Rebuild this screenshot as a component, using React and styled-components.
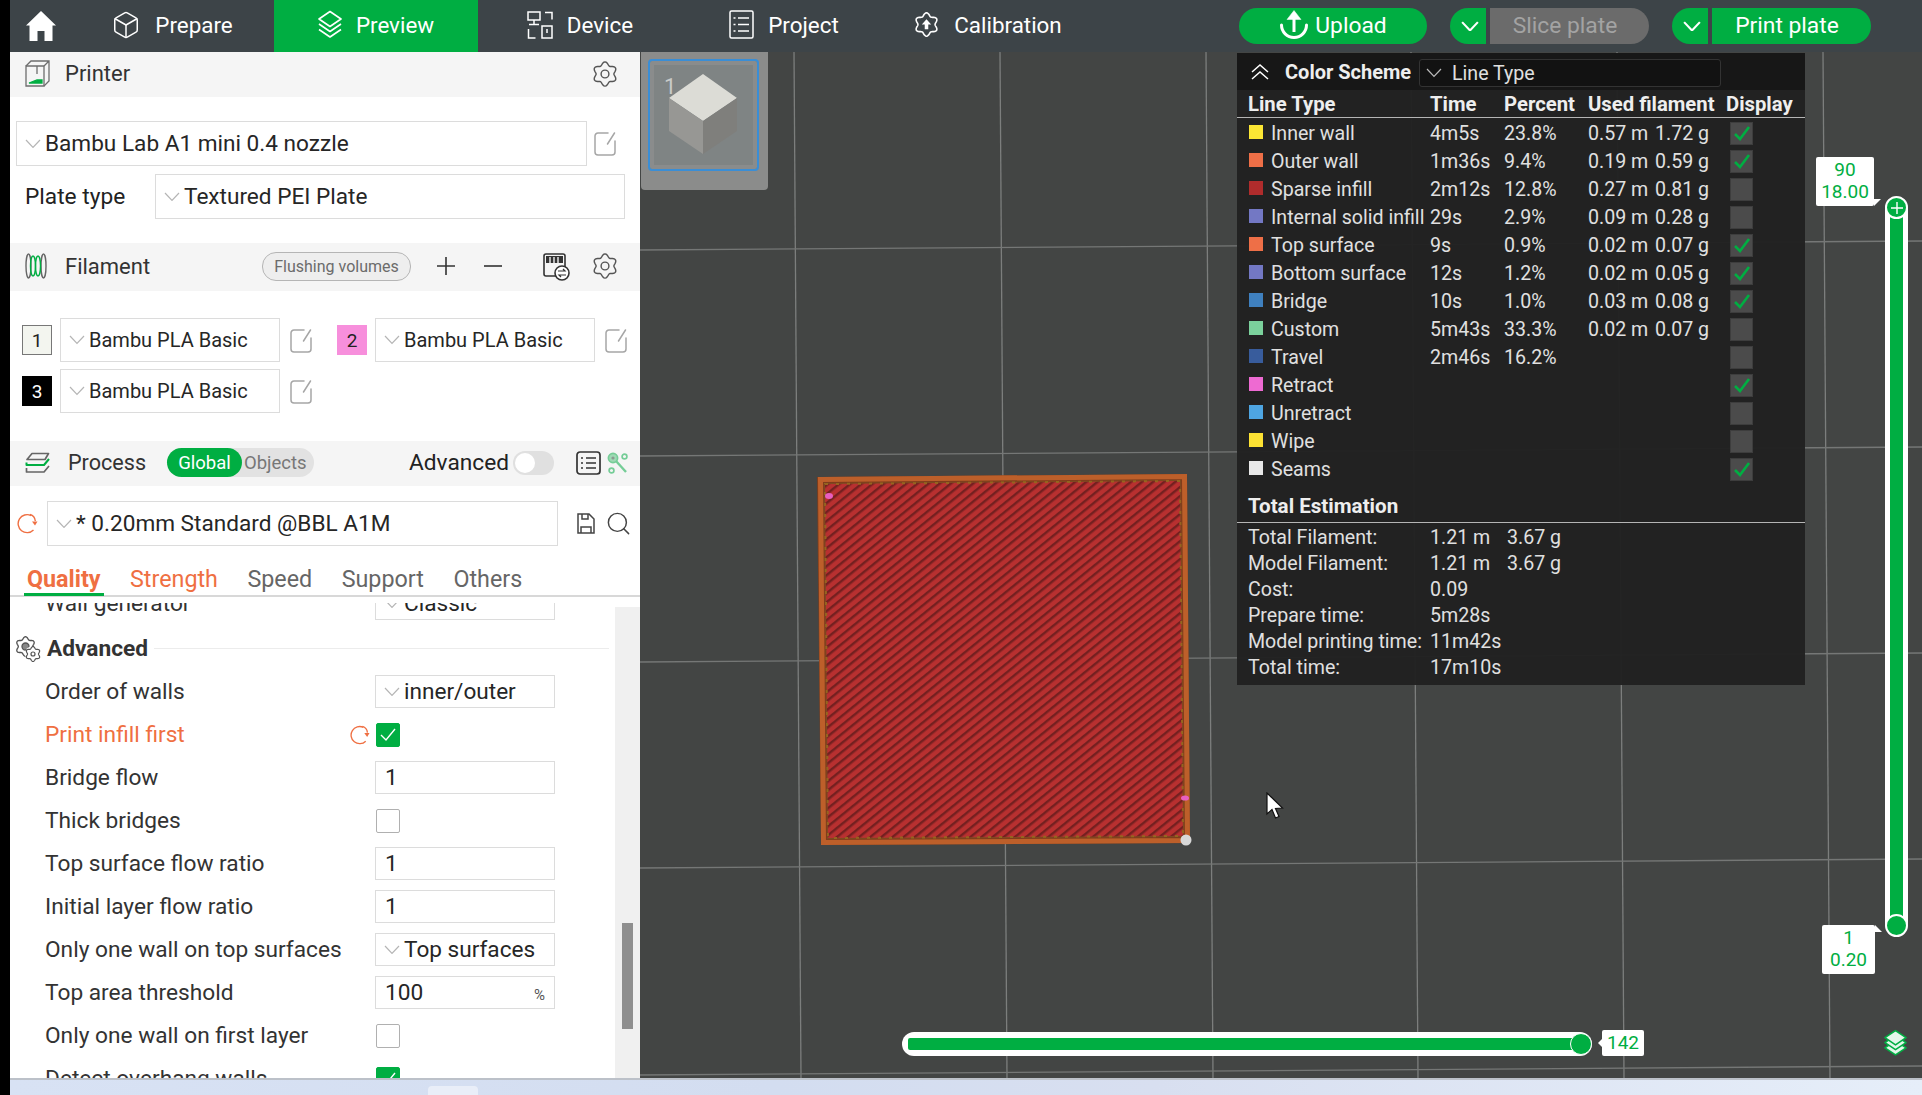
import React from 'react'
import styled, { createGlobalStyle } from 'styled-components'
import { Box, Search } from 'lucide-react'

const GREEN = '#00ae42'
const ORANGE = '#ef6f42'

const GlobalStyle = createGlobalStyle`
  html, body { margin: 0; padding: 0; background: #000; }
  * { box-sizing: border-box; }
  body { font-family: Roboto, "Noto Sans", sans-serif; overflow: hidden; }
`

const Chev = ({ color = '#b5b5b5', w = 16, sw = 1.2 }) => (
  <svg width={w} height={w * 0.6} viewBox="0 0 16 9.6" fill="none" stroke={color} strokeWidth={sw}>
    <polyline points="1,1 8,8.4 15,1" />
  </svg>
)

// six lobed outline used by all the settings gears
const gearOutline = Array.from({ length: 72 }, (_, i) => {
  const t = (i / 72) * Math.PI * 2
  const r = 9.7 + 1.5 * Math.cos(6 * t)
  return `${(12 + r * Math.sin(t)).toFixed(2)},${(12 - r * Math.cos(t)).toFixed(2)}`
}).join(' ')

const Gear = ({ size = 26, color = '#555', sw = 1.3, hub = 3.6, hubFill = 'none' }) => (
  <svg width={size} height={size} viewBox="0 0 24 24" fill="none" stroke={color} strokeWidth={sw}>
    <polygon points={gearOutline} strokeLinejoin="round" />
    {hub > 0 && <circle cx="12" cy="12" r={hub} fill={hubFill} />}
  </svg>
)

const HomeIcon = () => (
  <svg width="32" height="32" viewBox="0 0 32 32" fill="#fff">
    <path d="M16 1 L31 15.5 L27.5 15.5 L27.5 31 L19.5 31 L19.5 21 L12.5 21 L12.5 31 L4.5 31 L4.5 15.5 L1 15.5 Z" />
  </svg>
)

const StackIcon = () => (
  <svg width="24" height="29" viewBox="0 0 24 29" fill="none" stroke="#fff" strokeWidth="1.6" strokeLinejoin="round">
    <path d="M12 1.5 L23 9 L12 16.5 L1 9 Z" />
    <path d="M1 14 L12 21.5 L23 14" />
    <path d="M1 19.5 L12 27 L23 19.5" />
  </svg>
)

const LayersButtonIcon = () => (
  <svg width="23" height="28" viewBox="0 0 24 29" fill="#e4f7eb" stroke={GREEN} strokeWidth="1.6" strokeLinejoin="round">
    <path d="M1 19.5 L12 12 L23 19.5 L12 27 Z" />
    <path d="M1 14 L12 6.5 L23 14 L12 21.5 Z" />
    <path d="M12 1.5 L23 9 L12 16.5 L1 9 Z" />
  </svg>
)

const DeviceIcon = () => (
  <svg width="26" height="28" viewBox="0 0 26 28" fill="none" stroke="#fff" strokeWidth="1.5">
    <rect x="1" y="1" width="12" height="8" />
    <path d="M7 9v4M2 13.5h10" />
    <path d="M18 1.5h7v7" />
    <path d="M1.5 18v9h7" />
    <rect x="15" y="15" width="10" height="12" />
    <path d="M20 18v4" />
  </svg>
)

const ProjectIcon = () => (
  <svg width="25" height="29" viewBox="0 0 25 29" fill="none" stroke="#fff" strokeWidth="1.5">
    <rect x="1" y="1" width="23" height="27" rx="1.5" />
    <path d="M9 8h11M9 14.5h11M9 21h11M4.5 8h2M4.5 14.5h2M4.5 21h2" />
  </svg>
)

const SettingsListIcon = () => (
  <svg width="25" height="24" viewBox="0 0 25 24" fill="none" stroke="#333" strokeWidth="1.7">
    <rect x="1" y="1" width="23" height="22" rx="3" />
    <path d="M10 7h10M10 12h10M10 17h10M5 7h2M5 12h2M5 17h2" />
  </svg>
)

const CalibrationIcon = () => (
  <Overlaid>
    <Gear size={25} color="#fff" sw={1.5} hub={0} />
    <svg width="25" height="25" viewBox="0 0 24 24" fill="#fff">
      <path d="M12 7 L16.5 12 H13.7 V16.5 H10.3 V12 H7.5 Z" />
    </svg>
  </Overlaid>
)

const UploadIcon = () => (
  <svg width="30" height="31" viewBox="0 0 30 31" fill="none" stroke="#fff" strokeWidth="3">
    <path d="M2.5 15 a12.5 12.5 0 0 0 25 0" strokeLinecap="round" />
    <path d="M15 6V22" />
    <path d="M8 9.5 L15 0.5 L22 9.5 Z" fill="#fff" strokeWidth="0.5" />
  </svg>
)

const EditIcon = () => (
  <svg width="22" height="25" viewBox="0 0 22 25" fill="none" stroke="#a6a6a6" strokeWidth="1.5" strokeLinecap="round">
    <path d="M14 2H4a3 3 0 0 0-3 3v16a3 3 0 0 0 3 3h14a3 3 0 0 0 3-3V10" />
    <path d="M20.5 2 L13.5 13" />
  </svg>
)

const PrinterIcon = () => (
  <svg width="25" height="27" viewBox="0 0 25 27" fill="none" stroke="#6d6d6d" strokeWidth="1.3">
    <path d="M1 6h18v20H1z" />
    <path d="M1 6l5-5h18v20l-5 5M19 6l5-5" />
    <path d="M4 23 h13 v-3 h-5 Z" fill={GREEN} stroke={GREEN} />
    <path d="M12 6v8" />
  </svg>
)

const SpoolIcon = () => (
  <svg width="22" height="26" viewBox="0 0 22 26" fill="none" strokeWidth="1.4">
    <ellipse cx="3.5" cy="13" rx="2.5" ry="12" stroke="#666" />
    <ellipse cx="18.5" cy="13" rx="2.5" ry="12" stroke="#666" />
    <ellipse cx="8" cy="13" rx="2.5" ry="10" stroke={GREEN} />
    <ellipse cx="13" cy="13" rx="2.5" ry="10" stroke={GREEN} />
  </svg>
)

const FlushIcon = () => (
  <svg width="27" height="29" viewBox="0 0 27 29" fill="none" stroke="#333" strokeWidth="1.6">
    <rect x="1" y="2" width="21" height="22" rx="2" />
    <rect x="3" y="4" width="17" height="7" fill="#333" strokeWidth="0" />
    <path d="M7 5v6M11 5v6M15 5v6" stroke="#fff" strokeWidth="1.3" />
    <circle cx="19" cy="21" r="7" fill="#fff" />
    <path d="M15 19h7l-2-2M23 23h-7l2 2" strokeWidth="1.2" />
  </svg>
)

const ProcessIcon = () => (
  <svg width="25" height="22" viewBox="0 0 25 22" fill="none" strokeWidth="1.7" strokeLinejoin="round">
    <path d="M7 1.5 H23.5 L20 7.5 H2 Z" stroke="#666" />
    <path d="M1.5 10.5 V13 H19 L24 7" stroke={GREEN} strokeWidth="2" />
    <path d="M1.5 16 V20 H19 L24 14" stroke="#666" />
  </svg>
)

const ToolIcon = () => (
  <svg width="21" height="22" viewBox="0 0 21 22" fill="none" stroke="#75cd97" strokeWidth="1.7">
    <circle cx="6" cy="6" r="4.6" fill="#9ed9b4" />
    <circle cx="6" cy="6" r="1.6" fill="#8a9a90" stroke="none" />
    <circle cx="17.5" cy="4.5" r="2.4" />
    <circle cx="4.5" cy="18.5" r="2.4" />
    <path d="M9 9 L19 20" strokeWidth="2.4" />
  </svg>
)

const ResetIcon = ({ size = 21 }) => (
  <svg width={size} height={size} viewBox="0 0 21 21" fill="none" stroke={ORANGE} strokeWidth="1.4">
    <path d="M14 2.5 A9 9 0 1 0 16.5 17" />
    <path d="M13 1.5 C16.5 2.5 18 5 18.3 8" />
    <path d="M15 8.5 L20.5 8.5 L18 12.5 Z" fill={ORANGE} stroke="none" />
  </svg>
)

const SaveIcon = () => (
  <svg width="18" height="21" viewBox="0 0 18 21" fill="none" stroke="#444" strokeWidth="1.5">
    <path d="M1 1h11l5 5v14H1z" />
    <path d="M5 1v5h6V1M4 20v-6h10v6" />
  </svg>
)

const GearsIcon = () => (
  <Overlaid>
    <Gear size={21} color="#555" sw={1.5} hub={4} hubFill="#888" />
    <OffsetGear>
      <Gear size={16} color="#555" sw={1.8} hub={3} />
    </OffsetGear>
  </Overlaid>
)

const PlusIcon = () => (
  <svg width="18" height="18" viewBox="0 0 18 18" stroke="#333" strokeWidth="1.6"><path d="M9 0v18M0 9h18" /></svg>
)

const MinusIcon = () => (
  <svg width="18" height="18" viewBox="0 0 18 18" stroke="#333" strokeWidth="1.6"><path d="M0 9h18" /></svg>
)

const Overlaid = styled.span`
  position: relative;
  display: inline-flex;
  width: 26px;
  height: 26px;
  align-items: flex-start;
  justify-content: flex-start;
  svg:nth-child(2) { position: absolute; left: 0; top: 0; }
`
const OffsetGear = styled.span`
  position: absolute;
  right: 0;
  bottom: 0;
  display: flex;
  background: #fff;
  border-radius: 50%;
`

const App = () => (
  <>
    <GlobalStyle />
    <Page>
      <TopBar>
        <HomeSlot><HomeIcon /></HomeSlot>
        <Tab><Box size={30} color="#fff" strokeWidth={1.2} />Prepare</Tab>
        <Tab $active><StackIcon />Preview</Tab>
        <Tab><DeviceIcon />Device</Tab>
        <Tab><ProjectIcon />Project</Tab>
        <Tab><CalibrationIcon />Calibration</Tab>
        <Actions>
          <PillButton $w={188}><UploadIcon />Upload</PillButton>
          <SplitGroup>
            <SplitArrow><Chev color="#fff" w={18} sw={1.9} /></SplitArrow>
            <SplitMain $disabled>Slice plate</SplitMain>
          </SplitGroup>
          <SplitGroup>
            <SplitArrow><Chev color="#fff" w={18} sw={1.9} /></SplitArrow>
            <SplitMain>Print plate</SplitMain>
          </SplitGroup>
        </Actions>
      </TopBar>

      <Main>
        <Sidebar>
          <SectionHead $h={45}>
            <HeadIcon><PrinterIcon /></HeadIcon>
            <HeadTitle>Printer</HeadTitle>
            <HeadRight><Gear /></HeadRight>
          </SectionHead>
          <PrinterBody>
            <FieldRow>
              <Select $w={571} $h={45}><Chev />Bambu Lab A1 mini 0.4 nozzle</Select>
              <EditSlot $gap={7}><EditIcon /></EditSlot>
            </FieldRow>
            <FieldRow>
              <PlateLabel>Plate type</PlateLabel>
              <Select $w={470} $h={45}><Chev />Textured PEI Plate</Select>
            </FieldRow>
          </PrinterBody>

          <SectionHead $h={48}>
            <HeadIcon><SpoolIcon /></HeadIcon>
            <HeadTitle>Filament</HeadTitle>
            <FlushButton>Flushing volumes</FlushButton>
            <IconSlot $gap={26}><PlusIcon /></IconSlot>
            <IconSlot $gap={29}><MinusIcon /></IconSlot>
            <IconSlot $gap={41}><FlushIcon /></IconSlot>
            <IconSlot $gap={22}><Gear /></IconSlot>
          </SectionHead>
          <FilamentGrid>
            {[
              { n: 1, bg: '#f3f5ef', fg: '#222', line: '#777' },
              { n: 2, bg: '#f78fdc', fg: '#222', line: '#f78fdc' },
              { n: 3, bg: '#000', fg: '#fff', line: '#000' },
            ].map((f) => (
              <FilamentItem key={f.n}>
                <Swatch $bg={f.bg} $fg={f.fg} $line={f.line}>{f.n}</Swatch>
                <Select $w={220} $h={44} $fs={20}><Chev />Bambu PLA Basic</Select>
                <EditSlot $gap={2}><EditIcon /></EditSlot>
              </FilamentItem>
            ))}
          </FilamentGrid>

          <SectionHead $h={45} $pr={12}>
            <HeadIcon><ProcessIcon /></HeadIcon>
            <ProcessTitle>Process</ProcessTitle>
            <ModeToggle>
              <ModeOn>Global</ModeOn>
              <ModeOff>Objects</ModeOff>
            </ModeToggle>
            <AdvancedLabel>Advanced</AdvancedLabel>
            <Switch />
            <IconSlot $gap={22}><SettingsListIcon /></IconSlot>
            <IconSlot $gap={6}><ToolIcon /></IconSlot>
          </SectionHead>
          <PresetRow>
            <ResetSlot><ResetIcon /></ResetSlot>
            <Select $w={511} $h={45}><Chev />* 0.20mm Standard @BBL A1M</Select>
            <IconSlot $gap={19}><SaveIcon /></IconSlot>
            <IconSlot $gap={10}><Search size={27} color="#444" strokeWidth={1.3} /></IconSlot>
          </PresetRow>
          <Tabs>
            <PageTab $active>Quality</PageTab>
            <PageTab $changed>Strength</PageTab>
            <PageTab>Speed</PageTab>
            <PageTab>Support</PageTab>
            <PageTab>Others</PageTab>
          </Tabs>

          <SettingsArea>
            <SettingsClip>
              <SettingsInner>
                <SettingRow>
                  <SettingLabel>Wall generator</SettingLabel>
                  <Select $w={180} $h={33}><Chev />Classic</Select>
                </SettingRow>
                <GroupHead>
                  <GearsIcon />
                  <GroupTitle>Advanced</GroupTitle>
                  <GroupLine />
                </GroupHead>
                {settings.map((s) => (
                  <SettingRow key={s.label}>
                    <SettingLabel $changed={s.changed}>{s.label}</SettingLabel>
                    {s.changed && <RowReset><ResetIcon size={20} /></RowReset>}
                    {s.select && <Select $w={180} $h={33}><Chev />{s.select}</Select>}
                    {s.value && (
                      <Input>
                        {s.value}
                        {s.unit && <Unit>{s.unit}</Unit>}
                      </Input>
                    )}
                    {s.check !== undefined && (
                      <Check $on={s.check}>
                        {s.check && (
                          <svg width="18" height="16" viewBox="0 0 18 16" fill="none" stroke="#fff" strokeWidth="1.4">
                            <polyline points="2,8 7,13 16,2" />
                          </svg>
                        )}
                      </Check>
                    )}
                  </SettingRow>
                ))}
              </SettingsInner>
            </SettingsClip>
            <ScrollTrack><ScrollThumb /></ScrollTrack>
          </SettingsArea>
        </Sidebar>

        <Viewport>
          <Scene />
          <PlateThumb>
            <PlateInner>
              <PlateNo>1</PlateNo>
              <CubeSvg width="68" height="80" viewBox="0 0 68 80">
                <polygon points="34,0 68,24 34,47 0,24" fill="#dcdcd6" />
                <polygon points="0,24 34,47 34,80 0,57" fill="#979794" />
                <polygon points="68,24 34,47 34,80 68,57" fill="#7f7f7c" />
              </CubeSvg>
            </PlateInner>
          </PlateThumb>

          <Legend>
            <LegendTop>
              <svg width="20" height="17" viewBox="0 0 20 17" fill="none" stroke="#fff" strokeWidth="1.5">
                <polyline points="2,9 10,2 18,9" />
                <polyline points="2,16 10,9 18,16" />
              </svg>
              <LegendTitle>Color Scheme</LegendTitle>
              <LegendSelect><Chev color="#bbb" w={16} />Line Type</LegendSelect>
            </LegendTop>
            <LegendHead>
              <span>Line Type</span>
              <span>Time</span>
              <span>Percent</span>
              <span>Used filament</span>
              <span>Display</span>
            </LegendHead>
            <LegendRows>
              {lines.map((l) => (
                <LegendRow key={l.name}>
                  <NameCell><ColorChip $c={l.color} />{l.name}</NameCell>
                  <span>{l.time}</span>
                  <span>{l.pct}</span>
                  <span>{l.len}</span>
                  <span>{l.g}</span>
                  <LegendCheck>
                    {l.on && (
                      <svg width="18" height="16" viewBox="0 0 18 16" fill="none" stroke={GREEN} strokeWidth="2.6">
                        <polyline points="2,9 7,14 16,2" />
                      </svg>
                    )}
                  </LegendCheck>
                </LegendRow>
              ))}
            </LegendRows>
            <TotalHead>Total Estimation</TotalHead>
            <TotalRows>
              {totals.map((t) => (
                <TotalRow key={t.k}>
                  <span>{t.k}</span>
                  <span>{t.a}</span>
                  <span>{t.b}</span>
                </TotalRow>
              ))}
            </TotalRows>
          </Legend>

          <VTrack />
          <VThumb $top={144}>
            <svg width="14" height="14" viewBox="0 0 14 14" stroke="#fff" strokeWidth="1.4"><path d="M7 1v12M1 7h12" /></svg>
          </VThumb>
          <VThumb $top={862} />
          <TipUp>90<br />18.00</TipUp>
          <TipDown>1<br />0.20</TipDown>

          <HTrack>
            <HFill />
            <HThumb />
          </HTrack>
          <HTip>142</HTip>
          <LayersCorner><LayersButtonIcon /></LayersCorner>
          <Cursor>
            <svg width="20" height="28" viewBox="0 0 20 28">
              <path d="M2 1 L2 22 L7 17.5 L10.5 26 L14 24.5 L10.5 16.5 L17.5 16 Z" fill="#fff" stroke="#111" strokeWidth="1.2" />
            </svg>
          </Cursor>
        </Viewport>
      </Main>
      <BottomStrip><BottomTab /></BottomStrip>
    </Page>
  </>
)

// grid lines and the sliced model, in page coordinates
const Scene = () => {
  const verticals = [794, 1000, 1206, 1411, 1617, 1823]
  const horizontals = [250, 456, 662, 868, 1075]
  return (
    <SceneSvg viewBox="640 52 1282 1026">
      <defs>
        <pattern id="infill" width="7" height="7" patternUnits="userSpaceOnUse" patternTransform="rotate(-39)">
          <rect width="7" height="7" fill="#b83030" />
          <rect y="0" width="7" height="2" fill="#742020" />
          <rect y="2" width="7" height="0.9" fill="#962828" />
        </pattern>
      </defs>
      {verticals.map((x) => (
        <line key={x} x1={x} y1="52" x2={x + 7} y2="1078" stroke="#7c7e7d" strokeWidth="1.3" />
      ))}
      {horizontals.map((y) => (
        <line key={y} x1="640" y1={y} x2="1922" y2={y - 9} stroke="#757776" strokeWidth="1.3" />
      ))}
      <polygon points="817,477 1187,474 1190,843 821,845" fill="#7f3d1c" />
      <polygon points="820.5,479.5 1184.5,476.5 1187.5,840.5 823.5,842.5" fill="none" stroke="#bd5f2a" strokeWidth="5" />
      <polygon points="824,483 1181,480 1184,837 827,839" fill="#7e4a20" />
      <polygon points="825,484 1180,481 1183,836 828,838" fill="url(#infill)" />
      <polygon points="825,484 1180,481 1183,836 828,838" fill="none" stroke="#96641f" strokeWidth="2" strokeDasharray="3 8" />
      <ellipse cx="829" cy="496" rx="4" ry="3" fill="#e85fc0" />
      <ellipse cx="1185" cy="798" rx="4" ry="2.6" fill="#e85fc0" />
      <circle cx="1186" cy="840" r="5.5" fill="#d8d8d8" />
    </SceneSvg>
  )
}

const settings = [
  { label: 'Order of walls', select: 'inner/outer' },
  { label: 'Print infill first', check: true, changed: true },
  { label: 'Bridge flow', value: '1' },
  { label: 'Thick bridges', check: false },
  { label: 'Top surface flow ratio', value: '1' },
  { label: 'Initial layer flow ratio', value: '1' },
  { label: 'Only one wall on top surfaces', select: 'Top surfaces' },
  { label: 'Top area threshold', value: '100', unit: '%' },
  { label: 'Only one wall on first layer', check: false },
  { label: 'Detect overhang walls', check: true },
]

const lines = [
  { name: 'Inner wall', color: '#fbe634', time: '4m5s', pct: '23.8%', len: '0.57 m', g: '1.72 g', on: true },
  { name: 'Outer wall', color: '#ee6f47', time: '1m36s', pct: '9.4%', len: '0.19 m', g: '0.59 g', on: true },
  { name: 'Sparse infill', color: '#b02c2c', time: '2m12s', pct: '12.8%', len: '0.27 m', g: '0.81 g' },
  { name: 'Internal solid infill', color: '#7378c4', time: '29s', pct: '2.9%', len: '0.09 m', g: '0.28 g' },
  { name: 'Top surface', color: '#ee6f47', time: '9s', pct: '0.9%', len: '0.02 m', g: '0.07 g', on: true },
  { name: 'Bottom surface', color: '#7378c4', time: '12s', pct: '1.2%', len: '0.02 m', g: '0.05 g', on: true },
  { name: 'Bridge', color: '#3f80bf', time: '10s', pct: '1.0%', len: '0.03 m', g: '0.08 g', on: true },
  { name: 'Custom', color: '#7bd19c', time: '5m43s', pct: '33.3%', len: '0.02 m', g: '0.07 g' },
  { name: 'Travel', color: '#385c9c', time: '2m46s', pct: '16.2%' },
  { name: 'Retract', color: '#ee6ad2', on: true },
  { name: 'Unretract', color: '#4ea5e2' },
  { name: 'Wipe', color: '#fde233' },
  { name: 'Seams', color: '#e8e8e8', on: true },
]

const totals = [
  { k: 'Total Filament:', a: '1.21 m', b: '3.67 g' },
  { k: 'Model Filament:', a: '1.21 m', b: '3.67 g' },
  { k: 'Cost:', a: '0.09' },
  { k: 'Prepare time:', a: '5m28s' },
  { k: 'Model printing time:', a: '11m42s' },
  { k: 'Total time:', a: '17m10s' },
]

const Page = styled.div`
  width: 1922px;
  height: 1095px;
  padding-left: 10px;
  display: flex;
  flex-direction: column;
  background: #000;
  overflow: hidden;
`
const TopBar = styled.div`
  height: 52px;
  flex: none;
  display: flex;
  align-items: stretch;
  background: #3d4448;
  color: #fff;
  font-size: 22.4px;
`
const HomeSlot = styled.div`
  width: 60px;
  padding-left: 15px;
  display: flex;
  align-items: center;
`
const Tab = styled.div`
  width: 204px;
  padding-bottom: 3px;
  display: flex;
  align-items: center;
  justify-content: center;
  gap: 14px;
  background: ${(p) => (p.$active ? GREEN : 'transparent')};
`
const Actions = styled.div`
  margin-left: auto;
  padding-right: 51px;
  display: flex;
  align-items: center;
  gap: 23px;
  font-size: 22.8px;
`
const PillButton = styled.div`
  width: ${(p) => p.$w}px;
  height: 36px;
  border-radius: 18px;
  background: ${GREEN};
  padding-bottom: 2px;
  display: flex;
  align-items: center;
  justify-content: center;
  gap: 6px;
`
const SplitGroup = styled.div`
  display: flex;
  gap: 4px;
  height: 36px;
`
const SplitArrow = styled.div`
  width: 36px;
  padding-left: 4px;
  border-radius: 18px 0 0 18px;
  background: ${GREEN};
  display: flex;
  align-items: center;
  justify-content: center;
`
const SplitMain = styled.div`
  width: 159px;
  padding: 0 9px 2px 0;
  border-radius: 0 18px 18px 0;
  background: ${(p) => (p.$disabled ? '#6b6b6b' : GREEN)};
  color: ${(p) => (p.$disabled ? '#a3a3a3' : '#fff')};
  display: flex;
  align-items: center;
  justify-content: center;
`
const Main = styled.div`
  flex: 1;
  min-height: 0;
  display: flex;
`
const Sidebar = styled.div`
  width: 630px;
  flex: none;
  display: flex;
  flex-direction: column;
  background: #fff;
  color: #222;
  font-size: 22.7px;
`
const SectionHead = styled.div`
  height: ${(p) => p.$h}px;
  flex: none;
  padding: 0 ${(p) => p.$pr ?? 22}px 2px 15px;
  display: flex;
  align-items: center;
  background: #f5f5f5;
`
const HeadIcon = styled.div`
  width: 40px;
  display: flex;
`
const HeadTitle = styled.div`
  color: #333;
  font-size: 22px;
`
const HeadRight = styled.div`
  margin-left: auto;
  display: flex;
`
const PrinterBody = styled.div`
  padding: 24px 0 24px 6px;
  display: flex;
  flex-direction: column;
  gap: 8px;
`
const FieldRow = styled.div`
  display: flex;
  align-items: center;
`
const Select = styled.div`
  width: ${(p) => p.$w}px;
  height: ${(p) => p.$h}px;
  flex: none;
  border: 1px solid #dcdcdc;
  background: #fff;
  padding-left: 8px;
  display: flex;
  align-items: center;
  gap: 4px;
  color: #262626;
  font-size: ${(p) => p.$fs ?? 22.6}px;
  white-space: nowrap;
`
const EditSlot = styled.div`
  margin-left: ${(p) => p.$gap}px;
  display: flex;
`
const PlateLabel = styled.div`
  width: 139px;
  padding-left: 9px;
  flex: none;
`
const FlushButton = styled.div`
  margin-left: auto;
  width: 149px;
  height: 29px;
  border: 1px solid #b5b5b5;
  border-radius: 14px;
  background: #eeeeee;
  color: #6b6b6b;
  font-size: 16px;
  display: flex;
  align-items: center;
  justify-content: center;
`
const IconSlot = styled.div`
  margin-left: ${(p) => p.$gap}px;
  display: flex;
  flex: none;
`
const FilamentGrid = styled.div`
  padding: 27px 0 28px 12px;
  display: grid;
  grid-template-columns: 290px 290px;
  column-gap: 25px;
  row-gap: 7px;
`
const FilamentItem = styled.div`
  display: flex;
  align-items: center;
  gap: 8px;
`
const Swatch = styled.div`
  width: 30px;
  height: 30px;
  flex: none;
  background: ${(p) => p.$bg};
  color: ${(p) => p.$fg};
  border: 1px solid ${(p) => p.$line};
  font-size: 19px;
  display: flex;
  align-items: center;
  justify-content: center;
`
const ProcessTitle = styled.div`
  width: 99px;
  margin-left: 3px;
  flex: none;
  color: #333;
  font-size: 21.6px;
`
const ModeToggle = styled.div`
  width: 147px;
  height: 29px;
  flex: none;
  border-radius: 15px;
  background: #e2e2e2;
  display: flex;
  align-items: center;
  font-size: 18.5px;
`
const ModeOn = styled.div`
  width: 75px;
  height: 100%;
  border-radius: 15px;
  background: ${GREEN};
  color: #fff;
  display: flex;
  align-items: center;
  justify-content: center;
`
const ModeOff = styled.div`
  padding-left: 2px;
  color: #777;
`
const AdvancedLabel = styled.div`
  margin-left: auto;
`
const Switch = styled.div`
  width: 41px;
  height: 24px;
  margin-left: 4px;
  flex: none;
  border-radius: 12px;
  background: #e0e0e0;
  display: flex;
  padding: 2px;
  &::before {
    content: '';
    width: 20px;
    height: 20px;
    border-radius: 50%;
    background: #fff;
  }
`
const PresetRow = styled.div`
  height: 60px;
  padding: 15px 0 0 7px;
  flex: none;
  display: flex;
  align-items: center;
`
const ResetSlot = styled.div`
  width: 30px;
  height: 45px;
  flex: none;
  display: flex;
  align-items: center;
`
const Tabs = styled.div`
  height: 51px;
  flex: none;
  padding-left: 14px;
  display: flex;
  gap: 23.5px;
  font-size: 23.3px;
  border-bottom: 2px solid #d8d8d8;
`
const PageTab = styled.div`
  padding: 19px 3px 0;
  margin-bottom: -1px;
  display: flex;
  align-items: center;
  font-weight: ${(p) => (p.$active ? 700 : 400)};
  color: ${(p) => (p.$active || p.$changed ? ORANGE : '#666')};
  border-bottom: 3px solid ${(p) => (p.$active ? GREEN : 'transparent')};
`
const SettingsArea = styled.div`
  flex: 1;
  min-height: 0;
  padding-top: 6px;
  display: flex;
`
const SettingsClip = styled.div`
  width: 605px;
  flex: none;
  overflow: hidden;
`
const SettingsInner = styled.div`
  margin-top: -21px;
`
const SettingRow = styled.div`
  height: 43px;
  padding-left: 35px;
  display: flex;
  align-items: center;
  position: relative;
`
const SettingLabel = styled.div`
  width: 330px;
  flex: none;
  color: ${(p) => (p.$changed ? ORANGE : '#333')};
`
const RowReset = styled.div`
  position: absolute;
  left: 340px;
  top: 12px;
  display: flex;
`
const Input = styled.div`
  width: 180px;
  height: 33px;
  flex: none;
  border: 1px solid #dcdcdc;
  padding: 0 9px;
  display: flex;
  align-items: center;
  justify-content: space-between;
  color: #262626;
`
const Unit = styled.span`
  font-size: 15px;
  color: #555;
  padding-top: 5px;
`
const Check = styled.div`
  width: 24px;
  height: 24px;
  margin-left: 1px;
  flex: none;
  border-radius: 2px;
  border: 1px solid ${(p) => (p.$on ? GREEN : '#b0b0b0')};
  background: ${(p) => (p.$on ? GREEN : '#fff')};
  display: flex;
  align-items: center;
  justify-content: center;
`
const GroupHead = styled.div`
  height: 45px;
  padding: 2px 0 0 5px;
  display: flex;
  align-items: center;
`
const GroupTitle = styled.div`
  margin-left: 6px;
  font-weight: 700;
  color: #333;
`
const GroupLine = styled.div`
  flex: 1;
  height: 1px;
  margin: 0 6px;
  background: #ececec;
`
const ScrollTrack = styled.div`
  flex: 1;
  margin-top: 4px;
  padding: 316px 7px 0;
  background: #f0f0f0;
`
const ScrollThumb = styled.div`
  height: 106px;
  background: #8f8f8f;
`
const Viewport = styled.div`
  flex: 1;
  position: relative;
  overflow: hidden;
  background: #434544;
`
const SceneSvg = styled.svg`
  position: absolute;
  inset: 0;
  width: 1282px;
  height: 1026px;
`
const PlateThumb = styled.div`
  position: absolute;
  left: 1px;
  top: 0;
  width: 127px;
  height: 138px;
  padding: 7px 7px;
  background: #8b8c8b;
  border-radius: 0 0 4px 4px;
`
const PlateInner = styled.div`
  position: relative;
  width: 111px;
  height: 112px;
  border: 2px solid #3a8ed6;
  border-radius: 4px;
  background: #7f8484;
  box-shadow: inset 0 0 0 4px #8a8c8c;
  display: flex;
  align-items: center;
  justify-content: center;
`
const CubeSvg = styled.svg`
  margin: 0 2px 3px 0;
`
const PlateNo = styled.span`
  position: absolute;
  left: 14px;
  top: 13px;
  font-size: 22px;
  color: #c9cbc9;
`
const Legend = styled.div`
  position: absolute;
  left: 597px;
  top: 1px;
  width: 568px;
  height: 632px;
  background: rgba(33, 33, 33, 0.97);
  color: #e0e0e0;
  font-size: 19.6px;
`
const LegendTop = styled.div`
  height: 37px;
  padding-left: 13px;
  display: flex;
  align-items: center;
  background: #171717;
`
const LegendTitle = styled.div`
  margin-left: 15px;
  width: 134px;
  flex: none;
  font-size: 20px;
  font-weight: 700;
  color: #eee;
`
const LegendSelect = styled.div`
  width: 302px;
  height: 28px;
  margin-top: 3px;
  padding-left: 6px;
  border: 1px solid #333;
  border-radius: 3px;
  background: #121212;
  display: flex;
  align-items: center;
  gap: 10px;
`
const LegendHead = styled.div`
  height: 28px;
  padding-left: 11px;
  display: grid;
  grid-template-columns: 182px 74px 84px 138px auto;
  align-items: center;
  border-bottom: 1px solid #b5b5b5;
  font-size: 20.3px;
  font-weight: 700;
  color: #eee;
`
const LegendRows = styled.div`
  padding-top: 1px;
`
const LegendRow = styled.div`
  height: 28px;
  padding-left: 12px;
  display: grid;
  grid-template-columns: 181px 74px 84px 67px 75px 23px;
  align-items: center;
  white-space: nowrap;
`
const NameCell = styled.div`
  display: flex;
  align-items: center;
  gap: 8px;
`
const ColorChip = styled.span`
  width: 14px;
  height: 14px;
  flex: none;
  margin-top: -3px;
  background: ${(p) => p.$c};
`
const LegendCheck = styled.div`
  width: 23px;
  height: 23px;
  background: #4b4b4b;
  border: 1px solid #3d3d3d;
  display: flex;
  align-items: center;
  justify-content: center;
`
const TotalHead = styled.div`
  height: 38px;
  margin-top: 2px;
  padding: 5px 0 0 11px;
  display: flex;
  align-items: center;
  border-bottom: 1px solid #b5b5b5;
  font-size: 20.6px;
  font-weight: 700;
  color: #eee;
`
const TotalRows = styled.div`
  padding-top: 1px;
`
const TotalRow = styled.div`
  height: 26px;
  padding-left: 11px;
  display: grid;
  grid-template-columns: 182px 77px auto;
  align-items: center;
  white-space: nowrap;
`
const VTrack = styled.div`
  position: absolute;
  left: 1245px;
  top: 146px;
  width: 23px;
  height: 736px;
  border-radius: 12px;
  background: ${GREEN};
  border: 5px solid #fff;
`
const VThumb = styled.div`
  position: absolute;
  left: 1245px;
  top: ${(p) => p.$top}px;
  width: 23px;
  height: 23px;
  border-radius: 50%;
  background: ${GREEN};
  border: 2px solid #fff;
  display: flex;
  align-items: center;
  justify-content: center;
`
const Tip = styled.div`
  position: absolute;
  background: #fff;
  color: ${GREEN};
  font-size: 19px;
  line-height: 22px;
  text-align: center;
  border-radius: 2px;
`
const TipUp = styled(Tip)`
  left: 1176px;
  top: 105px;
  width: 58px;
  height: 49px;
  padding-top: 2px;
  &::after {
    content: '';
    position: absolute;
    right: -7px;
    bottom: 0;
    border-top: 7px solid #fff;
    border-right: 7px solid transparent;
  }
`
const TipDown = styled(Tip)`
  left: 1182px;
  top: 873px;
  width: 53px;
  height: 49px;
  padding-top: 2px;
  &::after {
    content: '';
    position: absolute;
    right: -7px;
    top: 0;
    border-bottom: 7px solid #fff;
    border-right: 7px solid transparent;
  }
`
const HTrack = styled.div`
  position: absolute;
  left: 262px;
  top: 980px;
  width: 690px;
  height: 24px;
  border-radius: 12px;
  background: #fff;
  padding: 6px 6px;
  display: flex;
  align-items: center;
`
const HFill = styled.div`
  width: 100%;
  height: 12px;
  border-radius: 2px 0 0 2px;
  background: ${GREEN};
`
const HThumb = styled.div`
  position: absolute;
  right: 0;
  top: 1px;
  width: 22px;
  height: 22px;
  border-radius: 50%;
  background: ${GREEN};
  border: 1px solid #fff;
`
const HTip = styled(Tip)`
  left: 962px;
  top: 978px;
  width: 42px;
  height: 26px;
  line-height: 26px;
  &::before {
    content: '';
    position: absolute;
    left: -4px;
    top: 9px;
    border-top: 4px solid transparent;
    border-bottom: 4px solid transparent;
    border-right: 4px solid #fff;
  }
`
const LayersCorner = styled.div`
  position: absolute;
  left: 1244px;
  top: 977px;
  display: flex;
`
const Cursor = styled.div`
  position: absolute;
  left: 625px;
  top: 740px;
  display: flex;
`
const BottomStrip = styled.div`
  height: 17px;
  flex: none;
  position: relative;
  border-top: 2px solid #bcc1c9;
  background: linear-gradient(90deg, #d8e2f4 0%, #d3ddf0 40%, #d8dff0 60%, #e6eef9 100%);
`
const BottomTab = styled.div`
  position: absolute;
  left: 418px;
  top: 6px;
  width: 50px;
  height: 10px;
  border-radius: 4px 4px 0 0;
  background: #e9eef8;
`

export default App
